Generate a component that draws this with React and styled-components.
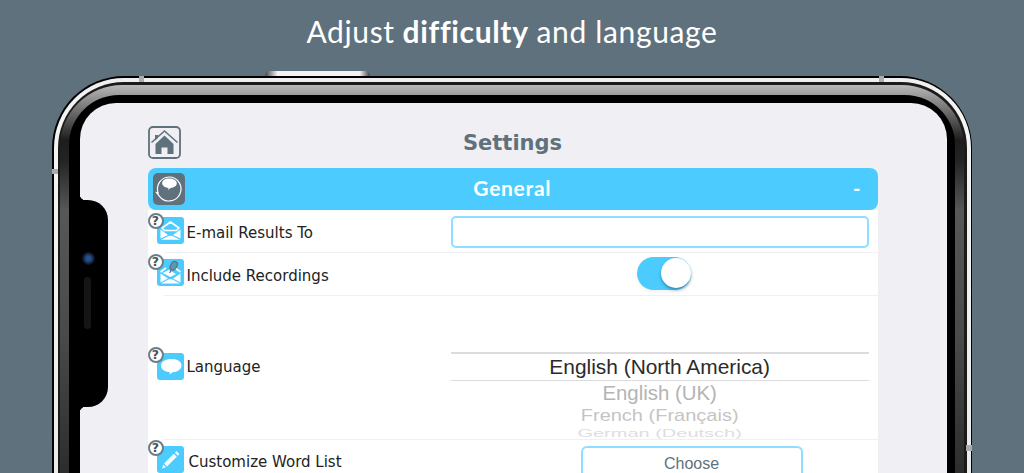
import React from "react";
import styled, { createGlobalStyle } from "styled-components";

const Global = createGlobalStyle`
  html, body { margin: 0; height: 100%; overflow: hidden; background: #5f717c; }
  #root { height: 100%; }
`;

const Page = styled.div`
  width: 1024px;
  height: 473px;
  overflow: hidden;
  display: flex;
  flex-direction: column;
`;

const Headline = styled.h1`
  margin: 0;
  height: 76px;
  padding-bottom: 14px;
  box-sizing: border-box;
  flex: none;
  display: flex;
  align-items: center;
  justify-content: center;
  gap: 0.26em;
  font: 400 30px "Lato", sans-serif;
  letter-spacing: 0.65px;
  color: #fff;
  b { font-weight: 700; }
`;

const PhoneOuter = styled.div`
  position: relative;
  flex: none;
  width: 920px;
  height: 560px;
  margin-left: 52px;
  box-sizing: border-box;
  padding: 1.5px;
  border-radius: 72px;
  background: #000;
`;

const Rim = styled.div`
  height: 100%;
  box-sizing: border-box;
  padding: 4px;
  border-radius: 70px;
  background: linear-gradient(#efefef, #f4f4f4 40px, #e8e8e8);
`;

const InnerLine = styled.div`
  height: 100%;
  box-sizing: border-box;
  padding: 3px 2.5px;
  border-radius: 66px;
  background: #1b1b1b;
`;

const Metal = styled.div`
  height: 100%;
  box-sizing: border-box;
  padding: 10px 9px;
  border-radius: 62px;
  background: linear-gradient(to bottom, #b9b9b9 0px, #9c9c9c 10px, #1d1d1d 55px, #232323 75px, #575757 125px, #4a4a4a 250px, #2a2a2a 400px);
`;

const Glass = styled.div`
  height: 100%;
  box-sizing: border-box;
  padding: 8px 8px 8px 11px;
  border-radius: 50px;
  background: #000;
`;

const Screen = styled.main`
  height: 100%;
  box-sizing: border-box;
  padding: 23px 2px 0 0;
  border-radius: 36px;
  background: #efeff4;
  display: flex;
  flex-direction: column;
  align-items: center;
`;

const Column = styled.div`
  width: 730px;
  display: flex;
  flex-direction: column;
`;

const TitleBar = styled.header`
  height: 33px;
  margin-bottom: 9px;
  display: flex;
  align-items: center;
`;

const Title = styled.div`
  flex: 1;
  margin-left: -33px;
  padding-top: 2px;
  text-align: center;
  font: 700 21px "DejaVu Sans", sans-serif;
  color: #5f717c;
`;

const SectionHeader = styled.div`
  height: 42px;
  box-sizing: border-box;
  padding: 0 17px 2px 5px;
  display: flex;
  align-items: center;
  background: #4ccbff;
  border-radius: 8px;
`;

const SectionBadge = styled.div`
  width: 32px;
  height: 32px;
  margin-top: 2px;
  border-radius: 5px;
  background: #5f717c;
  display: flex;
  align-items: center;
  justify-content: center;
`;

const SectionTitle = styled.div`
  flex: 1;
  margin-left: -13px;
  text-align: center;
  font: 700 21px "Lato", sans-serif;
  letter-spacing: 0.7px;
  color: #fff;
`;

const Collapse = styled.div`
  font: 700 20px "Lato", sans-serif;
  color: #fff;
`;

const List = styled.div`
  background: #fff;
`;

const Row = styled.div`
  position: relative;
  height: ${(p) => p.$h}px;
  box-sizing: border-box;
  padding: ${(p) => p.$pt}px 9px 0;
  display: flex;
  align-items: flex-start;
  &::after {
    content: "";
    position: absolute;
    left: 16px;
    right: 0;
    bottom: 0;
    height: 1px;
    background: #f0f0f2;
  }
`;

const Help = styled.span`
  position: absolute;
  left: 0;
  top: ${(p) => p.$top}px;
  width: 12px;
  height: 12px;
  border: 2px solid #6d7d87;
  border-radius: 50%;
  background: #fff;
  display: flex;
  align-items: center;
  justify-content: center;
  font: 700 12.5px "DejaVu Sans", sans-serif;
  color: #47525a;
  z-index: 1;
`;

const IconTile = styled.div`
  flex: none;
  width: 27px;
  height: 27px;
  margin-top: ${(p) => p.$mt ?? 0}px;
  border-radius: 3px;
  background: #4ccbff;
`;

const Label = styled.div`
  width: 267.5px;
  padding-left: ${(p) => p.$pl ?? 3}px;
  padding-top: ${(p) => p.$pt}px;
  box-sizing: border-box;
  font: 400 15px/1.2 "DejaVu Sans", sans-serif;
  color: #222;
  white-space: nowrap;
`;

const Input = styled.div`
  width: 418px;
  height: 32px;
  margin-top: -1px;
  box-sizing: border-box;
  border: 2px solid #8ddfff;
  border-radius: 5px;
`;

const SwitchWrap = styled.div`
  width: 418px;
  margin-top: -2px;
  display: flex;
  justify-content: center;
  padding-left: 8px;
  box-sizing: border-box;
`;

const Switch = styled.div`
  width: 54px;
  height: 33px;
  border-radius: 17px;
  background: #4ccbff;
  position: relative;
  box-shadow: 0 2px 4px rgba(0, 0, 0, 0.06);
`;

const Knob = styled.div`
  position: absolute;
  right: 0;
  top: 1.5px;
  width: 30px;
  height: 30px;
  border-radius: 50%;
  background: #fff;
  box-shadow: 0 2px 3px rgba(30, 90, 120, 0.55);
`;

const Picker = styled.div`
  width: 418px;
  height: 95px;
  margin-top: 49px;
  display: flex;
  flex-direction: column;
  align-items: center;
  font-family: "Liberation Sans", sans-serif;
  overflow: hidden;
`;

const Selected = styled.div`
  width: 100%;
  height: 29px;
  box-sizing: border-box;
  border-top: 2px solid #dcdcde;
  border-bottom: 1px solid #dcdcde;
  text-align: center;
  font-size: 20.9px;
  line-height: 25px;
  color: #2b2b2b;
`;

const Option = styled.div`
  height: ${(p) => p.$h}px;
  line-height: ${(p) => p.$h}px;
  font-size: ${(p) => p.$size}px;
  color: ${(p) => p.$color};
  transform: scaleY(${(p) => p.$sy});
  white-space: nowrap;
`;

const ChooseCell = styled.div`
  width: 418px;
  box-sizing: border-box;
  padding-right: 66px;
  display: flex;
  justify-content: flex-end;
`;

const Choose = styled.button`
  width: 222px;
  height: 44px;
  padding: 7px 0 0;
  background: #fff;
  border: 2px solid #8ddfff;
  border-radius: 6px;
  font: 400 16px "Liberation Sans", sans-serif;
  color: #5f717c;
  display: flex;
  justify-content: center;
`;

const Notch = styled.div`
  position: absolute;
  left: 27px;
  top: 124px;
  width: 29px;
  height: 207px;
  background: #000;
  border-radius: 0 20px 20px 0;
  &::before, &::after {
    content: "";
    position: absolute;
    left: 0;
    width: 8px;
    height: 8px;
  }
  &::before {
    top: -7px;
    background: radial-gradient(circle at 100% 0, transparent 7.5px, #000 8px);
  }
  &::after {
    bottom: -7px;
    background: radial-gradient(circle at 100% 100%, transparent 7.5px, #000 8px);
  }
`;

const Camera = styled.div`
  position: absolute;
  left: 3px;
  top: 52px;
  width: 13px;
  height: 13px;
  border-radius: 50%;
  background: radial-gradient(circle, #24508c 0 26%, #0d1726 62%, #080c14 100%);
`;

const Speaker = styled.div`
  position: absolute;
  left: 5px;
  top: 77px;
  width: 7px;
  height: 52px;
  border-radius: 4px;
  background: #151515;
`;

const SideButton = styled.div`
  position: absolute;
  left: 213px;
  top: -5px;
  width: 105px;
  height: 5px;
  border-radius: 5px 5px 0 0;
  background: linear-gradient(90deg, #444 0, #f4f4f4 12%, #f4f4f4 90%, #444 100%);
`;

const Band = styled.div`
  position: absolute;
  left: ${(p) => p.$x}px;
  top: ${(p) => p.$y}px;
  width: ${(p) => p.$w}px;
  height: ${(p) => p.$h}px;
  background: #a9adaf;
`;

const Home = () => (
  <svg width="33" height="33" viewBox="0 0 33 33">
    <rect x="1" y="1" width="31" height="31" rx="4" fill="#efeff4" stroke="#5f717c" strokeWidth="1.8" />
    <path d="M3.5 16.5 L16.5 5 L29.5 16.5" fill="none" stroke="#5f717c" strokeWidth="1.5" />
    <path d="M7 9h3v3l-3 2.6z" fill="#5f717c" />
    <path d="M7.5 18 L16.5 9.5 L25.5 18 V28 H19.5 V21.5 H13.5 V28 H7.5Z" fill="#5f717c" />
  </svg>
);

const HeadBubble = () => (
  <svg width="30" height="30" viewBox="0 0 30 30">
    <path d="M15 3a12 12 0 1 1-9.5 19.3L2.6 18.6l1.5.3A12 12 0 0 1 15 3z" fill="none" stroke="#fff" strokeWidth="1.2" />
    <path d="M15 4.5c4.5 0 7.8 1.8 7.8 4.8 0 2.8-3 4.5-6.2 4.7l-2.4 2 .3-2c-3.3-.2-6.3-2-6.3-4.7C8.2 6.3 11 4.5 15 4.5z" fill="#fff" />
  </svg>
);

const Envelope = () => (
  <svg width="27" height="27" viewBox="0 0 27 27">
    <path d="M5 11 L13.5 5 L22 11 L19.5 13.5 H7.5Z" fill="none" stroke="#fff" strokeWidth="1.6" strokeLinejoin="round" />
    <path d="M3.5 12.5 L11 18 L3.5 21.5Z M23.5 12.5 L16 18 L23.5 21.5Z" fill="#fff" />
    <path d="M4 22.8 L12 18.8 H15 L23 22.8Z" fill="#fff" />
  </svg>
);

const EnvelopeRec = () => (
  <svg width="27" height="27" viewBox="0 0 27 27">
    <path d="M3.5 13 L9 9 M18 9 L23.5 13" stroke="#fff" strokeWidth="1.6" />
    <path d="M3.5 14.5 L11 19.5 L3.5 23.5Z M23.5 14.5 L16 19.5 L23.5 23.5Z" fill="#fff" />
    <path d="M4 24.5 L12 20.3 H15 L23 24.5Z" fill="#fff" />
    <path d="M5.5 14 L12 11 L19 15 L13.5 18Z" fill="#fff" />
    <g transform="rotate(30 16 8)" fill="#5f717c" stroke="#5f717c" strokeWidth="1.2">
      <rect x="13" y="2" width="6" height="9" rx="3" fillOpacity=".55" />
      <path d="M16 11v4" />
    </g>
  </svg>
);

const Bubble = () => (
  <svg width="27" height="27" viewBox="0 0 27 27">
    <path d="M14.5 6c6 0 10 2.5 10 6.5 0 3.9-4.3 6.7-8.800 6.700l-3.200 2.300.4-2.400C8 18.800 4 16.500 4 12.500 4 8.500 8.500 6 14.500 6z" fill="#fff" />
  </svg>
);

const Pencil = () => (
  <svg width="27" height="27" viewBox="0 0 27 27">
    <path d="M19.5 5 L22.5 8 L20.8 9.7 L17.8 6.7Z M16.8 7.7 L19.8 10.7 L10 20.5 L7 17.5Z M6.3 18.5 L9 21.2 L5 22.5Z" fill="#fff" fillOpacity=".92" />
  </svg>
);

export default function App() {
  return (
    <Page>
      <Global />
      <Headline>
        <span>Adjust</span> <b>difficulty</b> <span>and language</span>
      </Headline>
      <PhoneOuter>
        <SideButton />
        <Band $x={87} $y={0} $w={5} $h={6} />
        <Band $x={827} $y={0} $w={5} $h={6} />
        <Band $x={0} $y={93} $w={6} $h={5} />
        <Band $x={914} $y={369} $w={6} $h={6} />
        <Rim>
          <InnerLine>
            <Metal>
              <Glass>
                <Screen>
                  <Column>
                    <TitleBar>
                      <Home />
                      <Title>Settings</Title>
                    </TitleBar>
                    <SectionHeader>
                      <SectionBadge>
                        <HeadBubble />
                      </SectionBadge>
                      <SectionTitle>General</SectionTitle>
                      <Collapse>-</Collapse>
                    </SectionHeader>
                    <List>
                      <Row $h={43} $pt={7}>
                        <Help $top={3}>?</Help>
                        <IconTile>
                          <Envelope />
                        </IconTile>
                        <Label $pt={7}>E-mail Results To</Label>
                        <Input />
                      </Row>
                      <Row $h={43} $pt={6}>
                        <Help $top={1}>?</Help>
                        <IconTile>
                          <EnvelopeRec />
                        </IconTile>
                        <Label $pt={8}>Include Recordings</Label>
                        <SwitchWrap>
                          <Switch>
                            <Knob />
                          </Switch>
                        </SwitchWrap>
                      </Row>
                      <Row $h={144} $pt={7}>
                        <Help $top={51}>?</Help>
                        <IconTile $mt={50}>
                          <Bubble />
                        </IconTile>
                        <Label $pt={55}>Language</Label>
                        <Picker>
                          <Selected>English (North America)</Selected>
                          <Option $h={24} $size={20.4} $color="#b4b4b4" $sy={1}>English (UK)</Option>
                          <Option $h={21} $size={20} $color="#c4c4c4" $sy={0.8}>French (Français)</Option>
                          <Option $h={14} $size={20} $color="#dedede" $sy={0.5}>German (Deutsch)</Option>
                        </Picker>
                      </Row>
                      <Row $h={60} $pt={6}>
                        <Help $top={0}>?</Help>
                        <IconTile>
                          <Pencil />
                        </IconTile>
                        <Label $pl={5} $pt={7}>Customize Word List</Label>
                        <ChooseCell>
                          <Choose>Choose</Choose>
                        </ChooseCell>
                      </Row>
                    </List>
                  </Column>
                </Screen>
              </Glass>
            </Metal>
          </InnerLine>
        </Rim>
        <Notch>
          <Camera />
          <Speaker />
        </Notch>
      </PhoneOuter>
    </Page>
  );
}
